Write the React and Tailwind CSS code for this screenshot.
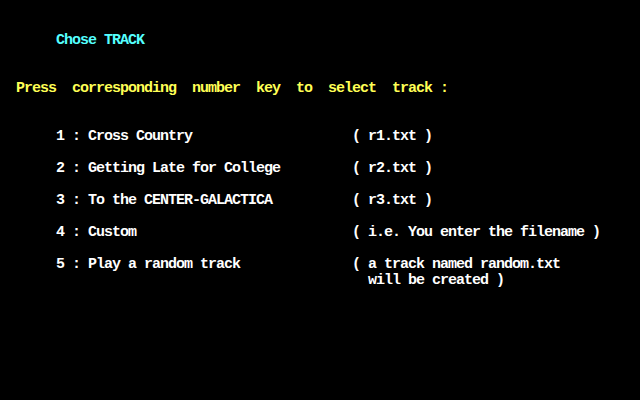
import React from "react";

// 80x25 text screen, 8x16 cells
const CYAN = "text-[#55ffff]";
const YELLOW = "text-[#ffff55]";
const WHITE = "text-[#ffffff]";

const pad = (s, n) => " ".repeat(n) + s;

const tracks = [
  ["1 : Cross Country", "( r1.txt )"],
  ["2 : Getting Late for College", "( r2.txt )"],
  ["3 : To the CENTER-GALACTICA", "( r3.txt )"],
  ["4 : Custom", "( i.e. You enter the filename )"],
  ["5 : Play a random track", "( a track named random.txt"],
];

function Line({ text = "", color = WHITE }) {
  return <div className={`h-4 whitespace-pre ${color}`}>{text}</div>;
}

export default function App() {
  const row = (left, right) => (pad(left, 7).padEnd(44, " ") + right);

  return (
    <div
      className="w-[640px] h-[400px] bg-black overflow-hidden pt-px font-bold text-[15px] leading-4 tracking-[-1px]"
      style={{ fontFamily: '"Liberation Mono", "DejaVu Sans Mono", monospace' }}
    >
      <Line />
      <Line />
      <Line text={pad("Chose TRACK", 7)} color={CYAN} />
      <Line />
      <Line />
      <Line
        text={pad("Press  corresponding  number  key  to  select  track :", 2)}
        color={YELLOW}
      />
      <Line />
      <Line />
      {tracks.map(([l, r], i) => (
        <React.Fragment key={i}>
          <Line text={row(l, r)} />
          {i < tracks.length - 1 && <Line />}
        </React.Fragment>
      ))}
      <Line text={pad("will be created )", 46)} />
    </div>
  );
}
